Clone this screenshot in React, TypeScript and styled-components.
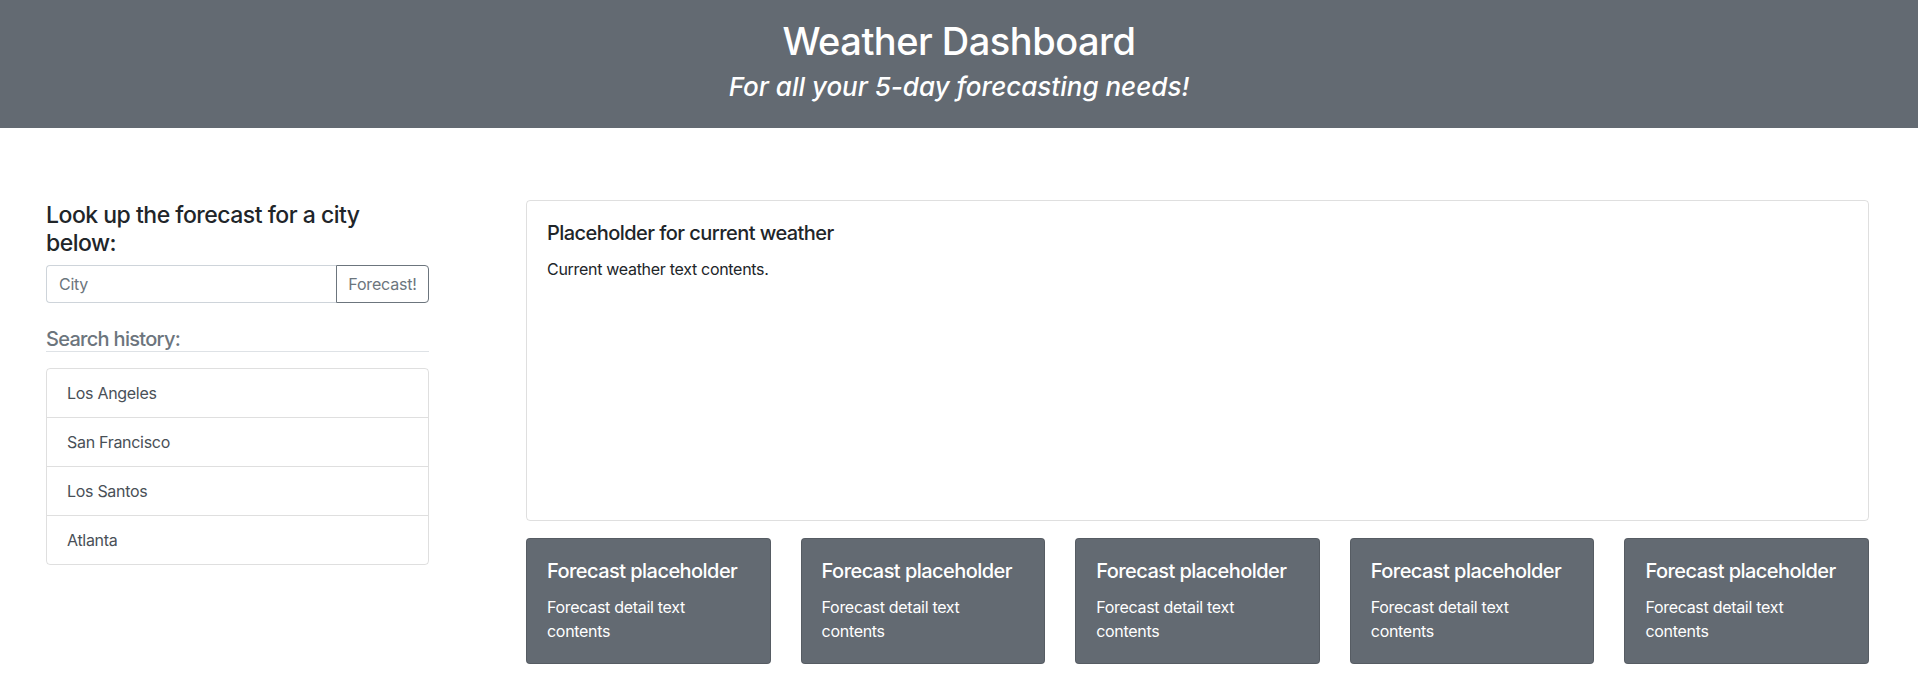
import styled, { createGlobalStyle } from 'styled-components'

const GlobalStyle = createGlobalStyle`
  * {
    box-sizing: border-box;
  }

  body {
    margin: 0;
    font-family: Inter, "Noto Sans", "Liberation Sans", sans-serif;
    font-size: 16px;
    line-height: 1.5;
    letter-spacing: -0.3px;
    color: #212529;
    background: #ffffff;
  }
`

const secondary = '#636a72'

const Header = styled.header`
  background-color: ${secondary};
  color: #ffffff;
  text-align: center;
  height: 128px;
  padding-top: 19px;
`

const Title = styled.h1`
  margin: 0;
  font-size: 38px;
  font-weight: 500;
  line-height: 1.2;
  letter-spacing: -0.5px;
`

const Tagline = styled.h2`
  margin: 6px 0 0;
  font-size: 26px;
  font-weight: 500;
  font-style: italic;
  line-height: 1.2;
  letter-spacing: 0;
`

const Main = styled.main`
  display: grid;
  grid-template-columns: 383px 1fr;
  column-gap: 97px;
  padding: 72px 49px 0 46px;
`

const Sidebar = styled.aside`
  display: flex;
  flex-direction: column;
  padding-top: 2px;
`

const SideHeading = styled.h4`
  margin: 0 0 8px;
  font-size: 23px;
  font-weight: 500;
  line-height: 1.2;
  letter-spacing: -0.5px;
`

const InputGroup = styled.div`
  display: flex;
  height: 38px;
`

const CityInput = styled.input`
  flex: 1;
  min-width: 0;
  height: 100%;
  padding: 6px 12px;
  font: inherit;
  letter-spacing: inherit;
  color: #495057;
  border: 1px solid #ced4da;
  border-right: none;
  border-radius: 4px 0 0 4px;

  &::placeholder {
    color: #6c757d;
  }
`

const SearchButton = styled.button`
  width: 93px;
  height: 100%;
  padding: 6px 8px;
  font: inherit;
  font-size: 16px;
  letter-spacing: -0.2px;
  color: #6c757d;
  background: transparent;
  border: 1px solid #6c757d;
  border-radius: 0 4px 4px 0;
  cursor: pointer;
`

const HistoryHeading = styled.h5`
  margin: 24px 0 16px;
  font-size: 20px;
  font-weight: 500;
  line-height: 1.2;
  letter-spacing: -0.7px;
  color: #6c757d;
  border-bottom: 1px solid #dee2e6;
`

const HistoryList = styled.ul`
  list-style: none;
  margin: 0;
  padding: 0;
  border: 1px solid rgba(0, 0, 0, 0.125);
  border-radius: 4px;
`

const HistoryItem = styled.li`
  padding: 12px 20px;
  font-size: 16px;
  line-height: 24px;
  color: #495057;

  & + & {
    border-top: 1px solid rgba(0, 0, 0, 0.125);
  }
`

const Content = styled.section`
  display: flex;
  flex-direction: column;
  gap: 17px;
`

const CurrentCard = styled.div`
  height: 321px;
  padding: 20px;
  border: 1px solid rgba(0, 0, 0, 0.125);
  border-radius: 4px;
`

const CardTitle = styled.h5<{ $light?: boolean }>`
  margin: 0 0 12px;
  font-size: 20px;
  font-weight: 500;
  line-height: 1.2;
  letter-spacing: -0.55px;
  color: ${(props) => (props.$light ? '#ffffff' : '#212529')};
`

const CardText = styled.p<{ $light?: boolean }>`
  margin: 0;
  font-size: 16px;
  line-height: 24px;
  color: ${(props) => (props.$light ? '#ffffff' : '#212529')};
`

const ForecastRow = styled.div`
  display: grid;
  grid-template-columns: repeat(5, 1fr);
  column-gap: 30px;
`

const ForecastCard = styled.div`
  height: 126px;
  padding: 20px;
  background-color: ${secondary};
  border: 1px solid rgba(0, 0, 0, 0.125);
  border-radius: 4px;
`

const cities = ['Los Angeles', 'San Francisco', 'Los Santos', 'Atlanta']

function App() {
  return (
    <>
      <GlobalStyle />
      <Header>
        <Title>Weather Dashboard</Title>
        <Tagline>For all your 5-day forecasting needs!</Tagline>
      </Header>
      <Main>
        <Sidebar>
          <SideHeading>Look up the forecast for a city below:</SideHeading>
          <InputGroup>
            <CityInput placeholder='City' />
            <SearchButton>Forecast!</SearchButton>
          </InputGroup>
          <HistoryHeading>Search history:</HistoryHeading>
          <HistoryList>
            {cities.map((city) => (
              <HistoryItem key={city}>{city}</HistoryItem>
            ))}
          </HistoryList>
        </Sidebar>
        <Content>
          <CurrentCard>
            <CardTitle>Placeholder for current weather</CardTitle>
            <CardText>Current weather text contents.</CardText>
          </CurrentCard>
          <ForecastRow>
            {[0, 1, 2, 3, 4].map((day) => (
              <ForecastCard key={day}>
                <CardTitle $light>Forecast placeholder</CardTitle>
                <CardText $light>Forecast detail text contents</CardText>
              </ForecastCard>
            ))}
          </ForecastRow>
        </Content>
      </Main>
    </>
  )
}

export default App
